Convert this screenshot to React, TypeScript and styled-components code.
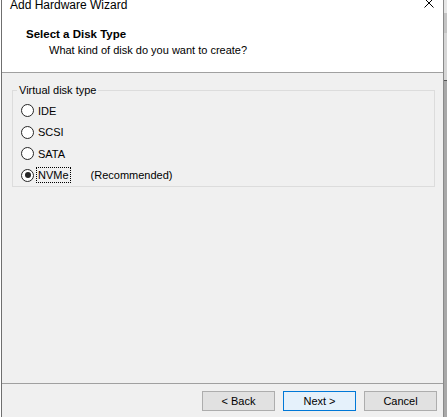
import React from "react";
import styled, { createGlobalStyle } from "styled-components";

const Global = createGlobalStyle`
  html, body { margin: 0; padding: 0; background: #ffffff; }
  body { font-family: "Liberation Sans", Arial, sans-serif; font-size: 11px; color: #000; }
  * { box-sizing: border-box; }
`;

const Page = styled.div`
  display: flex;
  width: 447px;
  height: 417px;
  overflow: hidden;
  background: #ffffff;
`;

const Window = styled.div`
  margin-left: 1px;
  width: 443px;
  height: 417px;
  border-left: 1px solid #6f6f6f;
  border-right: 1px solid #8a8a8a;
  display: flex;
  flex-direction: column;
  background: #f0f0f0;
`;

const Strip = styled.div`
  width: 3px;
  height: 417px;
  display: flex;
  flex-direction: column;
`;

const StripPart = styled.div<{ $h?: number; $c: string }>`
  background: ${(p) => p.$c};
  ${(p) => (p.$h !== undefined ? `height: ${p.$h}px;` : "flex: 1;")}
`;

const TitleBar = styled.div`
  height: 20px;
  background: #ffffff;
  display: flex;
  justify-content: space-between;
  align-items: flex-start;
  padding: 0 9px 0 8px;
  overflow: hidden;
`;

const TitleText = styled.div`
  line-height: 16px;
  margin-top: -3px;
  font-size: 12px;
`;

const CloseIcon = styled.svg`
  margin-top: -2px;
  display: block;
`;

const Header = styled.div`
  height: 53px;
  background: #ffffff;
  border-bottom: 1px solid #a0a0a0;
  padding: 6px 0 0 24px;
`;

const HeaderTitle = styled.div`
  font-weight: 700;
  font-size: 11.5px;
  line-height: 16px;
`;

const HeaderSub = styled.div`
  line-height: 16px;
  padding-left: 23px;
`;

const Body = styled.div`
  flex: 1;
  background: #f0f0f0;
  padding: 9px 8px 0 10px;
  border-bottom: 1px solid #a0a0a0;
`;

const Group = styled.fieldset`
  margin: 0;
  padding: 2px 0 0 4px;
  border: 1px solid #dcdcdc;
  min-width: 0;
`;

const Legend = styled.legend`
  padding: 0 2px;
  line-height: 16px;
  margin-left: 0;
`;

const RadioRow = styled.div`
  height: 21.5px;
  display: flex;
  align-items: center;
  padding-left: 4px;
`;

const Circle = styled.span<{ $checked?: boolean }>`
  width: 13px;
  height: 13px;
  border-radius: 50%;
  border: 1px solid #262626;
  background: #ffffff;
  display: flex;
  align-items: center;
  justify-content: center;
  flex: none;
  &::after {
    content: "";
    width: 6px;
    height: 6px;
    border-radius: 50%;
    background: #262626;
    display: ${(p) => (p.$checked ? "block" : "none")};
  }
`;

const Label = styled.span<{ $focus?: boolean }>`
  margin-left: 2px;
  padding: 0 1px;
  line-height: 14px;
  border: 1px ${(p) => (p.$focus ? "dotted #000" : "solid transparent")};
`;

const Note = styled.span`
  margin-left: 20px;
`;

const Footer = styled.div`
  height: 33px;
  display: flex;
  justify-content: flex-end;
  align-items: flex-start;
  gap: 8px;
  padding: 7px 6px 0 0;
  background: #f0f0f0;
`;

const Button = styled.button<{ $default?: boolean }>`
  width: 73px;
  height: 20px;
  padding: 0;
  font-family: inherit;
  font-size: 11px;
  line-height: 16px;
  color: #000;
  background: ${(p) => (p.$default ? "#e5f1fb" : "#e1e1e1")};
  border: 1px solid ${(p) => (p.$default ? "#0078d7" : "#adadad")};
  border-radius: 0;
`;

const options = [
  { id: "ide", label: "IDE" },
  { id: "scsi", label: "SCSI" },
  { id: "sata", label: "SATA" },
  { id: "nvme", label: "NVMe", note: "(Recommended)", checked: true },
];

export default function App() {
  return (
    <Page>
      <Global />
      <Window>
        <TitleBar>
          <TitleText>Add Hardware Wizard</TitleText>
          <CloseIcon width="10" height="10" viewBox="0 0 10 10">
            <path d="M0.5 0.5 L9.5 9.5 M9.5 0.5 L0.5 9.5" stroke="#000" strokeWidth="1" fill="none" />
          </CloseIcon>
        </TitleBar>
        <Header>
          <HeaderTitle>Select a Disk Type</HeaderTitle>
          <HeaderSub>What kind of disk do you want to create?</HeaderSub>
        </Header>
        <Body>
          <Group>
            <Legend>Virtual disk type</Legend>
            {options.map((o) => (
              <RadioRow key={o.id}>
                <Circle $checked={o.checked} />
                <Label $focus={o.checked}>{o.label}</Label>
                {o.note && <Note>{o.note}</Note>}
              </RadioRow>
            ))}
          </Group>
        </Body>
        <Footer>
          <Button>&lt; Back</Button>
          <Button $default>Next &gt;</Button>
          <Button>Cancel</Button>
        </Footer>
      </Window>
      <Strip>
        <StripPart $h={13} $c="#e6e6e6" />
        <StripPart $h={20} $c="#c4c4c4" />
        <StripPart $h={47} $c="#d6d6d6" />
        <StripPart $h={1} $c="#555555" />
        <StripPart $c="#a8a8a8" />
      </Strip>
    </Page>
  );
}
